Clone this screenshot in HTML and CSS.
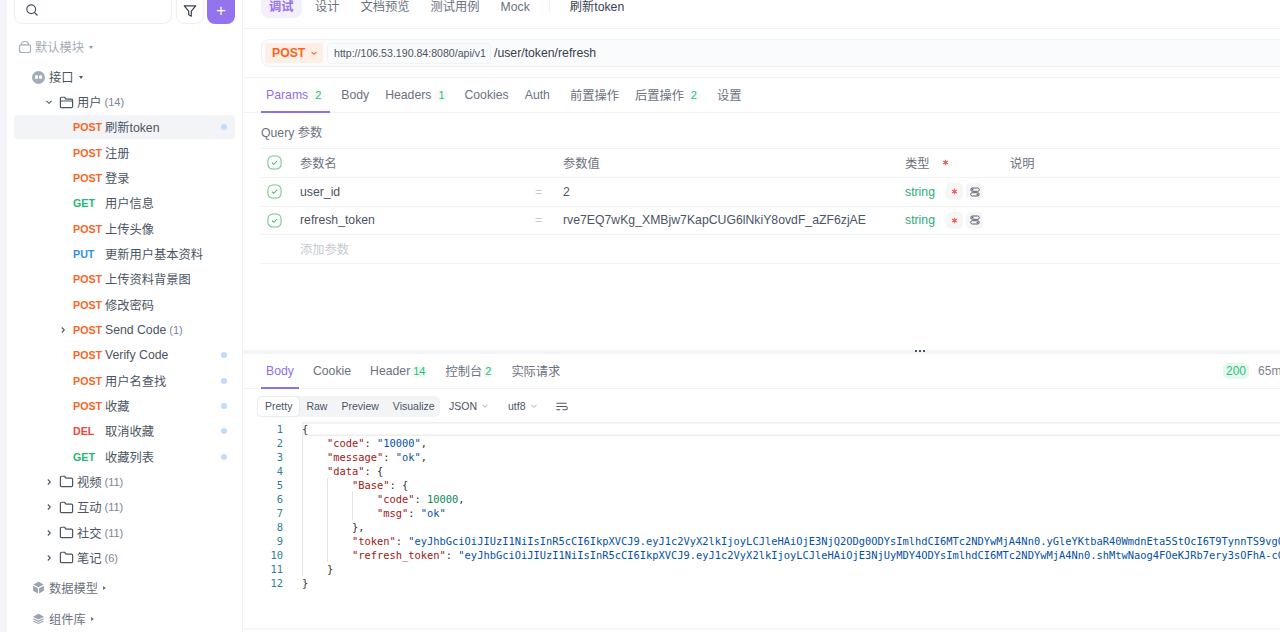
FILE: index.html
```html
<!DOCTYPE html>
<html lang="zh-CN">
<head>
    <meta charset="UTF-8">
    <title>刷新token</title>
    <link rel="stylesheet" href="styles.css">
</head>
<body>
    <svg class="sprite" xmlns="http://www.w3.org/2000/svg">
        <symbol id="i-folder" viewBox="0 0 16 16"><path d="M1.5 12.2V3.6c0-.7.5-1.2 1.2-1.2h3.2l1.6 2h5.8c.7 0 1.2.5 1.2 1.2v6.6c0 .7-.5 1.2-1.2 1.2H2.7c-.7 0-1.2-.5-1.2-1.2z" fill="none" stroke="currentColor" stroke-width="1.3" stroke-linejoin="round"/></symbol>
        <symbol id="i-folder-open" viewBox="0 0 16 16"><path d="M1.5 12.2V3.6c0-.7.5-1.2 1.2-1.2h3.2l1.6 2h5.8c.7 0 1.2.5 1.2 1.2v6.6c0 .7-.5 1.2-1.2 1.2H2.7c-.7 0-1.2-.5-1.2-1.2zM1.5 7.4c0-.6.5-1 1-1h11c.6 0 1 .4 1 1" fill="none" stroke="currentColor" stroke-width="1.3" stroke-linejoin="round"/></symbol>
        <symbol id="i-right" viewBox="0 0 8 8"><path d="M2.8 1.5 5.3 4 2.8 6.5" fill="none" stroke="currentColor" stroke-width="1.1"/></symbol>
        <symbol id="i-down" viewBox="0 0 8 8"><path d="M1.5 2.8 4 5.3l2.5-2.5" fill="none" stroke="currentColor" stroke-width="1.1"/></symbol>
        <symbol id="i-check" viewBox="0 0 16 16"><rect x="1" y="1" width="14" height="14" rx="5" fill="none" stroke="#6cc788" stroke-width="1.1"/><path d="M5.3 8.2 7.2 10l3.5-3.6" fill="none" stroke="#4bb36e" stroke-width="1.1"/></symbol>
        <symbol id="i-star" viewBox="0 0 8 8"><path d="M4 .8v6.4M1.2 2.4l5.6 3.2M6.8 2.4 1.2 5.6" stroke="#f0625f" stroke-width="1.3"/><circle cx="4" cy="4" r="1.6" fill="#f0625f"/></symbol>
        <symbol id="i-toggle" viewBox="0 0 10 10"><rect x=".7" y="1" width="8.6" height="3.3" rx="1.6" fill="none" stroke="#5b6472" stroke-width="1"/><rect x=".7" y="5.7" width="8.6" height="3.3" rx="1.6" fill="none" stroke="#5b6472" stroke-width="1"/><circle cx="2.5" cy="2.6" r="1" fill="#5b6472"/><circle cx="7.5" cy="7.4" r="1" fill="#5b6472"/></symbol>
    </svg>

    <div class="app">
        <aside class="sidebar">
            <div class="search-row">
                <div class="search-box">
                    <svg class="search-icon" viewBox="0 0 14 14"><circle cx="6.2" cy="6.2" r="4.4" fill="none" stroke="#4b5563" stroke-width="1.2"/><path d="m9.5 9.5 3 3" stroke="#4b5563" stroke-width="1.2"/></svg>
                </div>
                <div class="filter-btn">
                    <svg viewBox="0 0 14 14" width="14" height="14"><path d="M1.3 1.8h11.4L8.3 7.2v5l-2.6-1.4V7.2z" fill="none" stroke="#374151" stroke-width="1.2" stroke-linejoin="round"/></svg>
                </div>
                <div class="add-btn">+</div>
            </div>

            <div class="module">
                <svg class="module-icon" viewBox="0 0 14 14"><path d="M1.5 6.2c0-.8.6-1.4 1.4-1.4h8.2c.8 0 1.4.6 1.4 1.4v4.6c0 1-.8 1.7-1.7 1.7H3.2c-1 0-1.7-.8-1.7-1.7zM3.4 4.8c0-2 1.4-3.3 3.6-3.3s3.6 1.3 3.6 3.3" fill="none" stroke="#a3acb9" stroke-width="1.2"/></svg>
                <span>默认模块</span><span class="caret"></span>
            </div>

            <div class="section section-api">
                <span class="api-icon"><i></i><i></i></span>
                <span>接口</span><span class="caret dark"></span>
            </div>

            <div class="tree">
                <div class="row folder"><svg class="arrow"><use href="#i-down"/></svg><svg class="folder-icon"><use href="#i-folder-open"/></svg><span class="name">用户</span><span class="count">(14)</span></div>
                <div class="row api selected"><span class="method post">POST</span><span class="name">刷新token</span><span class="dot"></span></div>
                <div class="row api"><span class="method post">POST</span><span class="name">注册</span></div>
                <div class="row api"><span class="method post">POST</span><span class="name">登录</span></div>
                <div class="row api"><span class="method get">GET</span><span class="name">用户信息</span></div>
                <div class="row api"><span class="method post">POST</span><span class="name">上传头像</span></div>
                <div class="row api"><span class="method put">PUT</span><span class="name">更新用户基本资料</span></div>
                <div class="row api"><span class="method post">POST</span><span class="name">上传资料背景图</span></div>
                <div class="row api"><span class="method post">POST</span><span class="name">修改密码</span></div>
                <div class="row api has-arrow"><svg class="arrow"><use href="#i-right"/></svg><span class="method post">POST</span><span class="name">Send Code</span><span class="count">(1)</span></div>
                <div class="row api"><span class="method post">POST</span><span class="name">Verify Code</span><span class="dot"></span></div>
                <div class="row api"><span class="method post">POST</span><span class="name">用户名查找</span><span class="dot"></span></div>
                <div class="row api"><span class="method post">POST</span><span class="name">收藏</span><span class="dot"></span></div>
                <div class="row api"><span class="method del">DEL</span><span class="name">取消收藏</span><span class="dot"></span></div>
                <div class="row api"><span class="method get">GET</span><span class="name">收藏列表</span><span class="dot"></span></div>
                <div class="row folder"><svg class="arrow"><use href="#i-right"/></svg><svg class="folder-icon"><use href="#i-folder"/></svg><span class="name">视频</span><span class="count">(11)</span></div>
                <div class="row folder"><svg class="arrow"><use href="#i-right"/></svg><svg class="folder-icon"><use href="#i-folder"/></svg><span class="name">互动</span><span class="count">(11)</span></div>
                <div class="row folder"><svg class="arrow"><use href="#i-right"/></svg><svg class="folder-icon"><use href="#i-folder"/></svg><span class="name">社交</span><span class="count">(11)</span></div>
                <div class="row folder"><svg class="arrow"><use href="#i-right"/></svg><svg class="folder-icon"><use href="#i-folder"/></svg><span class="name">笔记</span><span class="count">(6)</span></div>
            </div>

            <div class="section section-model">
                <svg class="section-icon" viewBox="0 0 14 14"><path d="M7 .8 12.6 3.8 7 6.8 1.4 3.8zM1.2 5 6.4 7.8v5.6L1.2 10.6zM12.8 5 7.6 7.8v5.6l5.2-2.8z" fill="#9aa3b0"/></svg>
                <span>数据模型</span><span class="caret side"></span>
            </div>
            <div class="section section-lib">
                <svg class="section-icon" viewBox="0 0 14 14"><path d="M7 2 13 5 7 8 1 5z" fill="#9aa3b0"/><path d="M1.5 7.3 7 10l5.5-2.7M1.5 9.6 7 12.3l5.5-2.7" fill="none" stroke="#9aa3b0" stroke-width="1.2"/></svg>
                <span>组件库</span><span class="caret side"></span>
            </div>
        </aside>

        <main class="main">
            <nav class="top-tabs">
                <span class="top-tab active">调试</span>
                <span class="top-tab">设计</span>
                <span class="top-tab">文档预览</span>
                <span class="top-tab">测试用例</span>
                <span class="top-tab">Mock</span>
                <span class="top-sep"></span>
                <span class="top-title">刷新token</span>
            </nav>

            <section class="url-section">
                <div class="url-bar">
                    <div class="method-select">POST<svg class="select-arrow"><use href="#i-down"/></svg></div>
                    <div class="base-url">http://106.53.190.84:8080/api/v1</div>
                    <div class="path">/user/token/refresh</div>
                </div>
            </section>

            <nav class="tabs req-tabs">
                <span class="tab active">Params<b class="badge">2</b></span>
                <span class="tab">Body</span>
                <span class="tab">Headers<b class="badge">1</b></span>
                <span class="tab">Cookies</span>
                <span class="tab">Auth</span>
                <span class="tab tab-gap">前置操作</span>
                <span class="tab">后置操作<b class="badge">2</b></span>
                <span class="tab">设置</span>
            </nav>

            <section class="params">
                <div class="query-title">Query 参数</div>
                <div class="param-row head">
                    <svg class="check"><use href="#i-check"/></svg>
                    <span class="p-name">参数名</span><span class="p-eq"></span><span class="p-value">参数值</span>
                    <span class="p-type">类型<svg class="star head-star"><use href="#i-star"/></svg></span>
                    <span class="p-desc">说明</span>
                </div>
                <div class="param-row">
                    <svg class="check"><use href="#i-check"/></svg>
                    <span class="p-name">user_id</span><span class="p-eq">=</span><span class="p-value">2</span>
                    <span class="p-type"><span class="type-name">string</span><span class="chip"><svg class="star"><use href="#i-star"/></svg></span><span class="chip"><svg class="toggle"><use href="#i-toggle"/></svg></span></span>
                    <span class="p-desc"></span>
                </div>
                <div class="param-row">
                    <svg class="check"><use href="#i-check"/></svg>
                    <span class="p-name">refresh_token</span><span class="p-eq">=</span><span class="p-value">rve7EQ7wKg_XMBjw7KapCUG6lNkiY8ovdF_aZF6zjAE</span>
                    <span class="p-type"><span class="type-name">string</span><span class="chip"><svg class="star"><use href="#i-star"/></svg></span><span class="chip"><svg class="toggle"><use href="#i-toggle"/></svg></span></span>
                    <span class="p-desc"></span>
                </div>
                <div class="param-row add">
                    <span class="check"></span>
                    <span class="p-name">添加参数</span>
                </div>
            </section>

            <div class="splitter"><span class="grip"></span></div>

            <nav class="tabs res-tabs">
                <span class="tab active">Body</span>
                <span class="tab">Cookie</span>
                <span class="tab">Header<b class="badge plain">14</b></span>
                <span class="tab">控制台<b class="badge plain">2</b></span>
                <span class="tab">实际请求</span>
                <div class="res-meta"><span class="status">200</span><span class="meta-dot"></span><span>65ms</span></div>
            </nav>

            <div class="toolbar">
                <div class="segment">
                    <span class="seg active">Pretty</span>
                    <span class="seg">Raw</span>
                    <span class="seg">Preview</span>
                    <span class="seg">Visualize</span>
                </div>
                <span class="drop">JSON<svg><use href="#i-down"/></svg></span>
                <span class="drop">utf8<svg><use href="#i-down"/></svg></span>
                <svg class="wrap-icon" viewBox="0 0 14 14"><path d="M1.5 3.5h11M1.5 7h10a1.7 1.7 0 0 1 0 3.5H8M1.5 10.5h4" fill="none" stroke="#4b5563" stroke-width="1.1"/></svg>
            </div>

            <div class="code">
                <div class="gutter"><span>1</span><span>2</span><span>3</span><span>4</span><span>5</span><span>6</span><span>7</span><span>8</span><span>9</span><span>10</span><span>11</span><span>12</span></div>
                <div class="lines">
                    <div class="line current">{</div>
                    <div class="line"><i class="g"></i><span class="k">"code"</span>: <span class="s">"10000"</span>,</div>
                    <div class="line"><i class="g"></i><span class="k">"message"</span>: <span class="s">"ok"</span>,</div>
                    <div class="line"><i class="g"></i><span class="k">"data"</span>: {</div>
                    <div class="line"><i class="g"></i><i class="g"></i><span class="k">"Base"</span>: {</div>
                    <div class="line"><i class="g"></i><i class="g"></i><i class="g"></i><span class="k">"code"</span>: <span class="n">10000</span>,</div>
                    <div class="line"><i class="g"></i><i class="g"></i><i class="g"></i><span class="k">"msg"</span>: <span class="s">"ok"</span></div>
                    <div class="line"><i class="g"></i><i class="g"></i>},</div>
                    <div class="line"><i class="g"></i><i class="g"></i><span class="k">"token"</span>: <span class="s">"eyJhbGciOiJIUzI1NiIsInR5cCI6IkpXVCJ9.eyJ1c2VyX2lkIjoyLCJleHAiOjE3NjQ2ODg0ODYsImlhdCI6MTc2NDYwMjA4Nn0.yGleYKtbaR40WmdnEta5StOcI6T9TynnTS9vgQ"</span>,</div>
                    <div class="line"><i class="g"></i><i class="g"></i><span class="k">"refresh_token"</span>: <span class="s">"eyJhbGciOiJIUzI1NiIsInR5cCI6IkpXVCJ9.eyJ1c2VyX2lkIjoyLCJleHAiOjE3NjUyMDY4ODYsImlhdCI6MTc2NDYwMjA4Nn0.shMtwNaog4FOeKJRb7ery3sOFhA-cQ"</span></div>
                    <div class="line"><i class="g"></i>}</div>
                    <div class="line">}</div>
                </div>
            </div>
            <div class="bottom-line"></div>
        </main>
    </div>
</body>
</html>
```

FILE: styles.css
```css
* {
    box-sizing: border-box;
}

html, body {
    margin: 0;
    height: 632px;
    overflow: hidden;
}

body {
    font-family: "Liberation Sans", "Noto Sans CJK SC", sans-serif;
    font-size: 12.25px;
    color: #4b5563;
    background-color: #fff;
}

.sprite {
    display: none;
}

.app {
    display: flex;
    height: 632px;
    padding-left: 7px;
    background-color: #f3f4f9;
}

/* sidebar */
.sidebar {
    width: 236px;
    flex-shrink: 0;
    background: #fff;
    border-right: 1px solid #eff0f3;
    padding: 0 7px;
}

.search-row {
    display: flex;
    align-items: flex-end;
    gap: 4px;
    height: 24px;
}

.search-box, .filter-btn, .add-btn {
    height: 34px;
    flex-shrink: 0;
    border-radius: 8px;
    display: flex;
    align-items: flex-end;
}

.search-box {
    width: 158px;
    border: 1px solid #eceef1;
    padding: 0 0 6px 10px;
}

.search-icon {
    width: 14px;
    height: 14px;
}

.filter-btn {
    width: 28px;
    border: 1px solid #eceef1;
    justify-content: center;
    padding-bottom: 5px;
}

.add-btn {
    width: 28px;
    margin-left: -1px;
    background: #9373ee;
    color: #fff;
    justify-content: center;
    font-size: 17px;
    line-height: 20px;
    padding-bottom: 3px;
}

.module {
    display: flex;
    align-items: center;
    height: 20px;
    margin-top: 13px;
    padding-left: 4px;
    color: #a3acb9;
}

.module-icon {
    width: 14px;
    height: 14px;
    margin-right: 3px;
}

.caret {
    width: 0;
    height: 0;
    margin-left: 5px;
    border-left: 2.5px solid transparent;
    border-right: 2.5px solid transparent;
    border-top: 3.5px solid #8b93a0;
}

.caret.dark {
    border-top-color: #4b5563;
}

.caret.side {
    border-top: 2.5px solid transparent;
    border-bottom: 2.5px solid transparent;
    border-left: 3.5px solid #6b7280;
    border-right: 0;
}

.section {
    display: flex;
    align-items: center;
    height: 20px;
    padding-left: 18px;
    color: #6b7280;
}

.section-api {
    margin-top: 10px;
    color: #4b5563;
}

.section-model {
    margin-top: 8px;
}

.section-lib {
    margin-top: 11px;
}

.api-icon {
    display: flex;
    align-items: center;
    justify-content: center;
    gap: 1px;
    width: 13px;
    height: 13px;
    margin-right: 4px;
    border-radius: 50%;
    background: #a3acb9;
}

.api-icon i {
    width: 3px;
    height: 4px;
    border-radius: 2px;
    background: #fff;
}

.section-icon {
    width: 13px;
    height: 13px;
    margin-right: 4px;
}

.tree {
    margin-top: 3px;
}

.row {
    display: flex;
    align-items: center;
    height: 24px;
    margin-bottom: 1.33px;
    border-radius: 4px;
}

.row.selected {
    background: #f2f4f8;
}

.row.folder {
    padding-left: 31px;
}

.row.api {
    padding-left: 59px;
}

.row.has-arrow {
    padding-left: 45px;
}

.arrow {
    width: 8px;
    height: 8px;
    flex-shrink: 0;
    color: #4b5563;
}

.row.folder .arrow {
    margin-right: 6px;
}

.row.has-arrow .arrow {
    margin-right: 6px;
}

.folder-icon {
    width: 15px;
    height: 15px;
    margin-right: 3px;
    color: #4b5563;
}

.method {
    width: 32px;
    font-size: 10.7px;
    font-weight: bold;
}

.post { color: #f9651f; }
.get { color: #1fb872; }
.put { color: #2f8fea; }
.del { color: #f04438; }

.count {
    margin-left: 3px;
    font-size: 11px;
    color: #7b8494;
}

.dot {
    width: 6px;
    height: 6px;
    margin-left: auto;
    margin-right: 8px;
    border-radius: 50%;
    background: #bfdbfe;
}

/* main panel */
.main {
    flex: 1;
    min-width: 0;
    background: #fff;
}

.top-tabs {
    display: flex;
    align-items: flex-start;
    height: 29px;
    padding-left: 18px;
    line-height: 14px;
    border-bottom: 1px solid #f2f3f5;
    color: #6b7280;
}

.top-tab {
    margin-right: 21px;
    white-space: nowrap;
}

.top-tab.active {
    width: 41px;
    height: 24px;
    margin-top: -6px;
    margin-right: 13px;
    padding: 6px 8px 0;
    border-radius: 8px;
    background: #f3effc;
    color: #9373ee;
    font-weight: bold;
}

.top-sep {
    width: 1px;
    height: 12px;
    margin: 1px 20px 0 -2px;
    background: #f0f1f3;
}

.top-title {
    color: #374151;
}

.url-section {
    height: 49px;
    padding: 10px 0 0 18px;
    border-bottom: 1px solid #f2f3f5;
}

.url-bar {
    display: flex;
    align-items: center;
    width: 1100px;
    height: 28px;
    padding-left: 3px;
    border: 1px solid #eef0f3;
    border-radius: 8px;
    background: #fafbfc;
}

.method-select {
    display: flex;
    align-items: center;
    width: 58px;
    height: 20px;
    padding-left: 7px;
    border-radius: 3px;
    background: #fdeee6;
    color: #f9651f;
    font-weight: bold;
}

.select-arrow {
    width: 8px;
    height: 8px;
    margin-left: 5px;
}

.base-url {
    width: 164px;
    height: 21px;
    margin-left: 4px;
    padding-left: 6px;
    border: 1px solid #f1f2f5;
    border-radius: 4px;
    font-size: 10.6px;
    line-height: 19px;
    color: #4b5563;
    white-space: nowrap;
}

.path {
    margin-left: 3px;
    color: #374151;
}

.tabs {
    display: flex;
    align-items: center;
    height: 35px;
    padding-left: 18px;
    border-bottom: 1px solid #f2f3f5;
    color: #6b7280;
}

.tab {
    display: flex;
    align-items: center;
    height: 35px;
    margin-right: 9px;
    padding: 0 5px;
    white-space: nowrap;
}

.req-tabs .tab {
    margin-right: 6px;
}

.tab-gap {
    margin-left: 4px;
}

.tab.active {
    color: #8f6ef0;
    box-shadow: inset 0 -2px 0 #8f6ef0;
}

.badge {
    display: inline-block;
    margin-left: 3px;
    padding: 0 3px;
    min-width: 14px;
    border-radius: 7px;
    background: #f7f9f9;
    color: #2fbe78;
    font-size: 11px;
    font-weight: normal;
    line-height: 13px;
    text-align: center;
}

.badge.plain {
    min-width: 0;
    background: #eefaf3;
    margin-left: 2px;
    padding: 0 1px;
}

.params {
    height: 237px;
    padding: 0 0 0 18px;
}

.query-title {
    height: 36px;
    padding-top: 13px;
    line-height: 14px;
    color: #6b7280;
    border-bottom: 1px solid #f2f3f5;
}

.param-row {
    display: flex;
    align-items: center;
    height: 28.75px;
    border-bottom: 1px solid #f2f3f5;
    color: #4b5563;
}

.param-row.head {
    color: #6b7280;
}

.param-row.add {
    color: #c5cad2;
}

.check {
    display: block;
    width: 15px;
    height: 15px;
    margin-left: 6px;
    margin-right: 18px;
    flex-shrink: 0;
}

.p-name {
    width: 235px;
    flex-shrink: 0;
}

.p-eq {
    width: 28px;
    flex-shrink: 0;
    color: #c5cad2;
}

.p-value {
    width: 342px;
    flex-shrink: 0;
    white-space: nowrap;
    overflow: hidden;
}

.p-type {
    display: flex;
    align-items: center;
    width: 105px;
    flex-shrink: 0;
}

.p-desc {
    color: #6b7280;
}

.type-name {
    width: 41px;
    color: #2bac76;
}

.star {
    width: 7px;
    height: 7px;
}

.head-star {
    margin-left: 12px;
}

.chip {
    display: flex;
    align-items: center;
    justify-content: center;
    width: 17px;
    height: 17px;
    border-radius: 5px;
    background: #f6f6f7;
}

.chip + .chip {
    margin-left: 3px;
}

.toggle {
    width: 10px;
    height: 10px;
}

.splitter {
    position: relative;
    height: 4px;
    background: #f2f4f8;
}

.grip {
    position: absolute;
    left: 672px;
    top: 0;
    width: 10px;
    height: 2px;
    background: repeating-linear-gradient(90deg, #4b5563 0 2px, transparent 2px 4px);
}

.res-tabs {
    position: relative;
    height: 35px;
}

.res-meta {
    display: flex;
    align-items: center;
    margin-left: auto;
    width: 57px;
    flex-shrink: 0;
    font-size: 12px;
    color: #7b8494;
    white-space: nowrap;
}

.status {
    padding: 1px 3px;
    border-radius: 5px;
    background: #e6f8ee;
    color: #2fbe78;
    line-height: 14px;
}

.meta-dot {
    width: 2px;
    height: 2px;
    margin: 0 4px 0 5px;
    background: #d8dce2;
    border-radius: 50%;
}

.toolbar {
    display: flex;
    align-items: center;
    height: 34px;
    padding-left: 14px;
    font-size: 10.5px;
    color: #4b5563;
}

.segment {
    display: flex;
    align-items: center;
    height: 21px;
    width: 183px;
    padding: 0 1px;
    border-radius: 5px;
    background: #f3f4f6;
}

.seg {
    padding: 0 7px;
    line-height: 19px;
}

.seg.active {
    border-radius: 4px;
    background: #fff;
    box-shadow: 0 0 2px rgba(0, 0, 0, 0.12);
}

.drop {
    display: flex;
    align-items: center;
    margin-left: 9px;
    margin-right: 9px;
    margin-top: -1px;
}

.drop svg {
    width: 10px;
    height: 8px;
    margin-left: 3px;
    color: #c0c5cc;
}

.wrap-icon {
    width: 13px;
    height: 13px;
    margin-left: 7px;
}

.code {
    display: flex;
    height: 205px;
    font-family: "DejaVu Sans Mono", monospace;
    font-size: 10.4px;
    line-height: 14px;
    margin-top: -1px;
}

.gutter {
    display: flex;
    flex-direction: column;
    width: 59px;
    padding-right: 19px;
    text-align: right;
    color: #2f7f93;
    flex-shrink: 0;
}

.lines {
    flex: 1;
    min-width: 0;
    color: #333;
}

.line {
    height: 14px;
    white-space: pre;
}

.line.current {
    width: 1100px;
    box-shadow: inset 0 1.5px 0 #eeeeee, inset 0 -1.5px 0 #eeeeee, inset 1.5px 0 0 #eeeeee;
}

.g {
    display: inline-block;
    width: 25px;
    height: 14px;
    vertical-align: top;
    border-left: 1px solid #e4e4e4;
}

.k { color: #a31515; }
.s { color: #0451a5; }
.n { color: #098658; }

.bottom-line {
    height: 2px;
    margin-top: 1px;
    background: #f5f6f8;
}
```
